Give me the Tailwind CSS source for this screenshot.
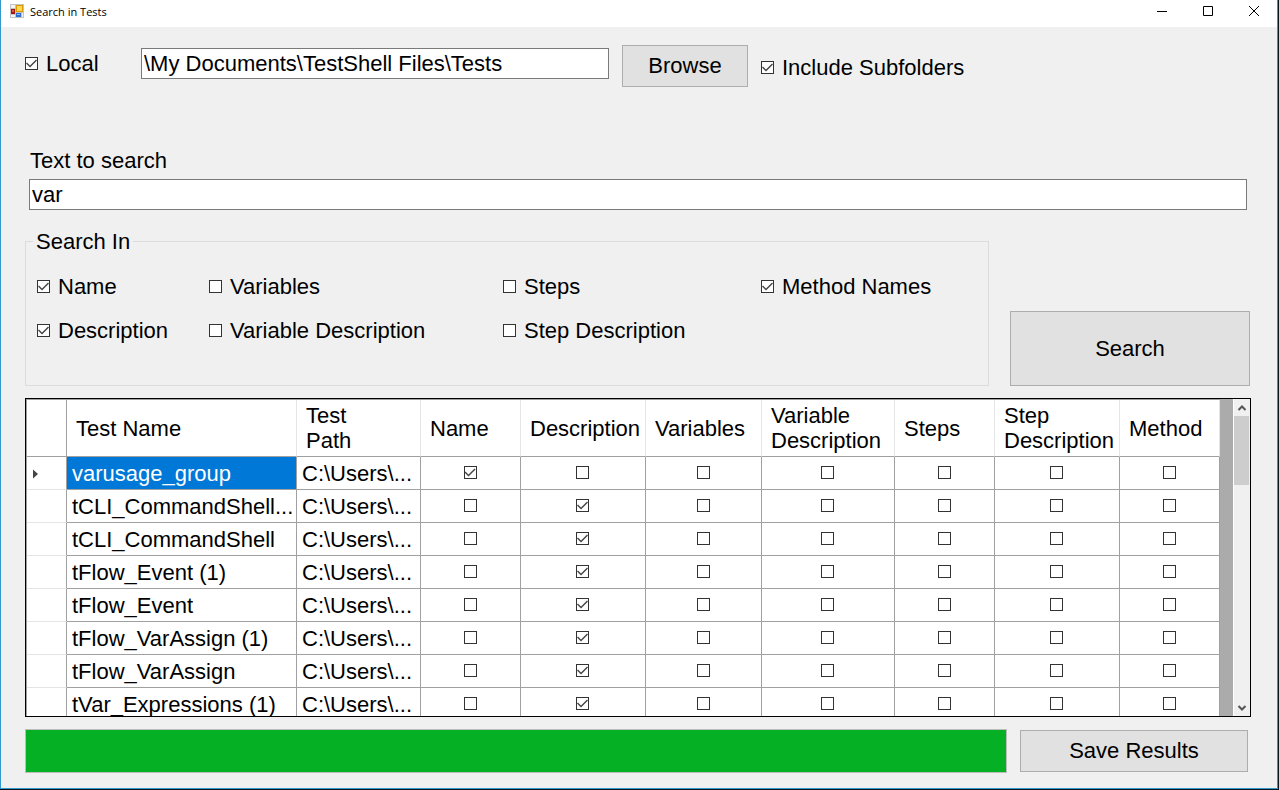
<!DOCTYPE html>
<html lang="en">
<head>
<meta charset="utf-8">
<meta name="viewport" content="width=device-width, initial-scale=1">
<title>Search in Tests</title>
<script src="https://cdn.jsdelivr.net/npm/@tailwindcss/browser@4"></script>
</head>
<body class="h-screen overflow-hidden bg-[#0b161c] pr-px pb-px font-['Liberation_Sans',Arial,sans-serif] text-[22px] leading-6 text-black">
<div class="flex h-full flex-col border-x border-b border-[#3399cc] bg-[#f0f0f0]">

  <header class="flex h-[27px] shrink-0 items-start bg-white pr-[17px] pl-2">
    <svg class="mt-[3px] size-4" viewBox="0 0 16 16" aria-hidden="true">
      <rect x="1" y="1" width="14" height="14" fill="#c4c4c4"/>
      <rect x="2" y="2" width="4" height="3" fill="#f4f4f4"/><rect x="2" y="12" width="4" height="2" fill="#f4f4f4"/><rect x="13" y="10" width="1" height="4" fill="#f4f4f4"/>
      <rect x="2" y="6" width="4" height="5" fill="#a3170f"/><rect x="3" y="7" width="2" height="2" fill="#e0563f"/>
      <rect x="7" y="2" width="7" height="7" fill="#d99a06"/><rect x="8" y="3" width="5" height="5" fill="#ffd84f"/>
      <rect x="7" y="10" width="5" height="4" fill="#2b6bd0"/><rect x="8" y="11" width="3" height="1" fill="#8fb8f5"/>
    </svg>
    <h1 class="mt-1 ml-[5px] flex-1 font-['Open_Sans','Noto_Sans',sans-serif] text-[11px] leading-4">Search in Tests</h1>
    <div class="mt-[5px] flex gap-[34px]">
      <button type="button" aria-label="Minimize"><svg class="size-3" viewBox="0 0 12 12"><path d="M1 6.500h10" stroke="#000" fill="none"/></svg></button>
      <button type="button" aria-label="Maximize"><svg class="size-3" viewBox="0 0 12 12"><path d="M1.500 1.500h9v9h-9z" stroke="#000" fill="none"/></svg></button>
      <button type="button" aria-label="Close"><svg class="size-3" viewBox="0 0 12 12"><path d="M1 1l10 10M11 1L1 11" stroke="#000" fill="none"/></svg></button>
    </div>
  </header>

  <main class="flex min-h-0 flex-1 flex-col pt-[18px] pr-[26px] pb-[15px] pl-6">
    <div class="flex items-start">
      <label class="mt-[7px] flex w-[116px] items-center gap-2"><input type="checkbox" data-check checked>Local</label>
      <input type="text" aria-label="Local folder" value="\My Documents\TestShell Files\Tests" class="mt-[3px] h-[31px] w-[468px] border border-[#7a7a7a] bg-white px-[2px]">
      <button type="button" class="ml-[13px] h-[42px] w-[126px] border border-[#adadad] bg-[#e1e1e1]">Browse</button>
      <label class="mt-[11px] ml-[13px] flex items-center gap-2"><input type="checkbox" data-check checked>Include Subfolders</label>
    </div>

    <div class="mt-[62px] mr-1 ml-1 flex flex-col gap-[6px]">
      <label for="query" class="pl-px">Text to search</label>
      <input id="query" type="text" value="var" class="h-[31px] w-full border border-[#7a7a7a] bg-white px-[2px]">
    </div>

    <div class="mt-[19px] flex items-end gap-[21px] pr-px">
      <fieldset class="h-[157px] flex-1 border border-[#dcdcdc] px-[11px]">
        <legend class="-ml-1 px-[3px] pt-px leading-6">Search In</legend>
        <div class="mt-[21px] grid grid-cols-[172px_294px_258px_1fr] gap-y-5">
          <label class="flex items-center gap-2"><input type="checkbox" data-check checked>Name</label>
          <label class="flex items-center gap-2"><input type="checkbox" data-check>Variables</label>
          <label class="flex items-center gap-2"><input type="checkbox" data-check>Steps</label>
          <label class="flex items-center gap-2"><input type="checkbox" data-check checked>Method Names</label>
          <label class="flex items-center gap-2"><input type="checkbox" data-check checked>Description</label>
          <label class="flex items-center gap-2"><input type="checkbox" data-check>Variable Description</label>
          <label class="flex items-center gap-2"><input type="checkbox" data-check>Step Description</label>
        </div>
      </fieldset>
      <button type="button" class="h-[75px] w-[240px] border border-[#adadad] bg-[#e1e1e1]">Search</button>
    </div>

    <div class="mt-3 flex min-h-0 flex-1 border border-black bg-[#ababab]">
      <div class="min-w-0 flex-1 overflow-hidden">
        <table class="w-[1194px] table-fixed border-separate border-spacing-0 border-t border-l border-[#a0a0a0] bg-white">
          <colgroup>
            <col class="w-[40px]"><col class="w-[230px]"><col class="w-[124px]"><col class="w-[100px]"><col class="w-[125px]"><col class="w-[116px]"><col class="w-[133px]"><col class="w-[100px]"><col class="w-[125px]"><col class="w-[100px]">
          </colgroup>
          <thead>
            <tr id="heads" class="h-[57px] text-left leading-[25px]"></tr>
          </thead>
          <tbody id="rows"></tbody>
        </table>
      </div>
      <div class="flex w-[17px] flex-col border-l border-white bg-[#f0f0f0]">
        <button type="button" aria-label="Scroll up" class="flex h-[17px] items-center justify-center"><svg class="size-3" viewBox="0 0 12 12"><path d="M2.500 8L6 4.500 9.500 8" stroke="#555" stroke-width="2" fill="none"/></svg></button>
        <div class="mr-px h-[69px] bg-[#cdcdcd]"></div>
        <button type="button" aria-label="Scroll down" class="mt-auto flex h-[17px] items-center justify-center"><svg class="size-3" viewBox="0 0 12 12"><path d="M2.500 4L6 7.500 9.500 4" stroke="#555" stroke-width="2" fill="none"/></svg></button>
      </div>
    </div>

    <div class="mt-3 flex items-center gap-[13px] pr-[3px]">
      <progress aria-label="Search progress" max="100" value="100" class="h-11 flex-1 appearance-none border border-[#bcbcbc] [&::-webkit-progress-bar]:bg-[#e6e6e6] [&::-webkit-progress-value]:bg-[#06b025]"></progress>
      <button type="button" class="h-[42px] w-[228px] border border-[#adadad] bg-[#e1e1e1]">Save Results</button>
    </div>
  </main>
</div>

<script>
const checkClass = "relative mb-[2px] block size-[13px] shrink-0 appearance-none border border-[#333] bg-white checked:before:absolute checked:before:inset-0 checked:before:bg-[#444] checked:before:[clip-path:polygon(0px_6px,1px_5px,4px_8px,10px_2px,11px_3px,4px_10px)]";
const heads = ["", "Test Name", "Test<br>Path", "Name", "Description", "Variables", "Variable<br>Description", "Steps", "Step<br>Description", "Method"];
const fields = ["Name", "Description", "Variables", "Variable Description", "Steps", "Step Description", "Method"];
const tests = [
  ["varusage_group", 0], ["tCLI_CommandShell...", 1], ["tCLI_CommandShell", 1], ["tFlow_Event (1)", 1],
  ["tFlow_Event", 1], ["tFlow_VarAssign (1)", 1], ["tFlow_VarAssign", 1], ["tVar_Expressions (1)", 1]
];
document.getElementById("heads").innerHTML = heads.map((h, i) =>
  i === 0
    ? `<td class="border-r border-b border-[#a0a0a0]"></td>`
    : `<th scope="col" class="border-r border-b border-r-[#e5e5e5] border-b-[#a0a0a0] p-0 pl-[9px] font-normal whitespace-nowrap">${h}</th>`).join("");
document.getElementById("rows").innerHTML = tests.map(([name, hit], r) => `
  <tr class="h-[33px]">
    <td class="border-r border-b border-r-[#a0a0a0] border-b-[#e5e5e5] p-0 pt-[2px] pl-[6px]">${r === 0 ? '<svg class="h-[10px] w-[6px]" viewBox="0 0 6 10"><path d="M0 0.500L5 5 0 9.500z" fill="#444"/></svg>' : ""}</td>
    <td class="${r === 0 ? "bg-[#0078d7] text-white" : "bg-white"} border-r border-b border-[#a0a0a0] p-0 pt-[2px] pl-[5px] whitespace-nowrap">${name}</td>
    <td class="border-r border-b border-[#a0a0a0] p-0 pt-[2px] pl-[5px] whitespace-nowrap">C:\\Users\\...</td>
    ${fields.map((f, i) => `<td class="border-r border-b border-[#a0a0a0] p-0 pr-px"><input type="checkbox" data-check aria-label="${name}: ${f}" ${i === hit ? "checked" : ""}></td>`).join("")}
  </tr>`).join("");
document.querySelectorAll("[data-check]").forEach(box => {
  box.className = checkClass;
  if (box.closest("td")) box.classList.add("mx-auto");
});
</script>
</body>
</html>
